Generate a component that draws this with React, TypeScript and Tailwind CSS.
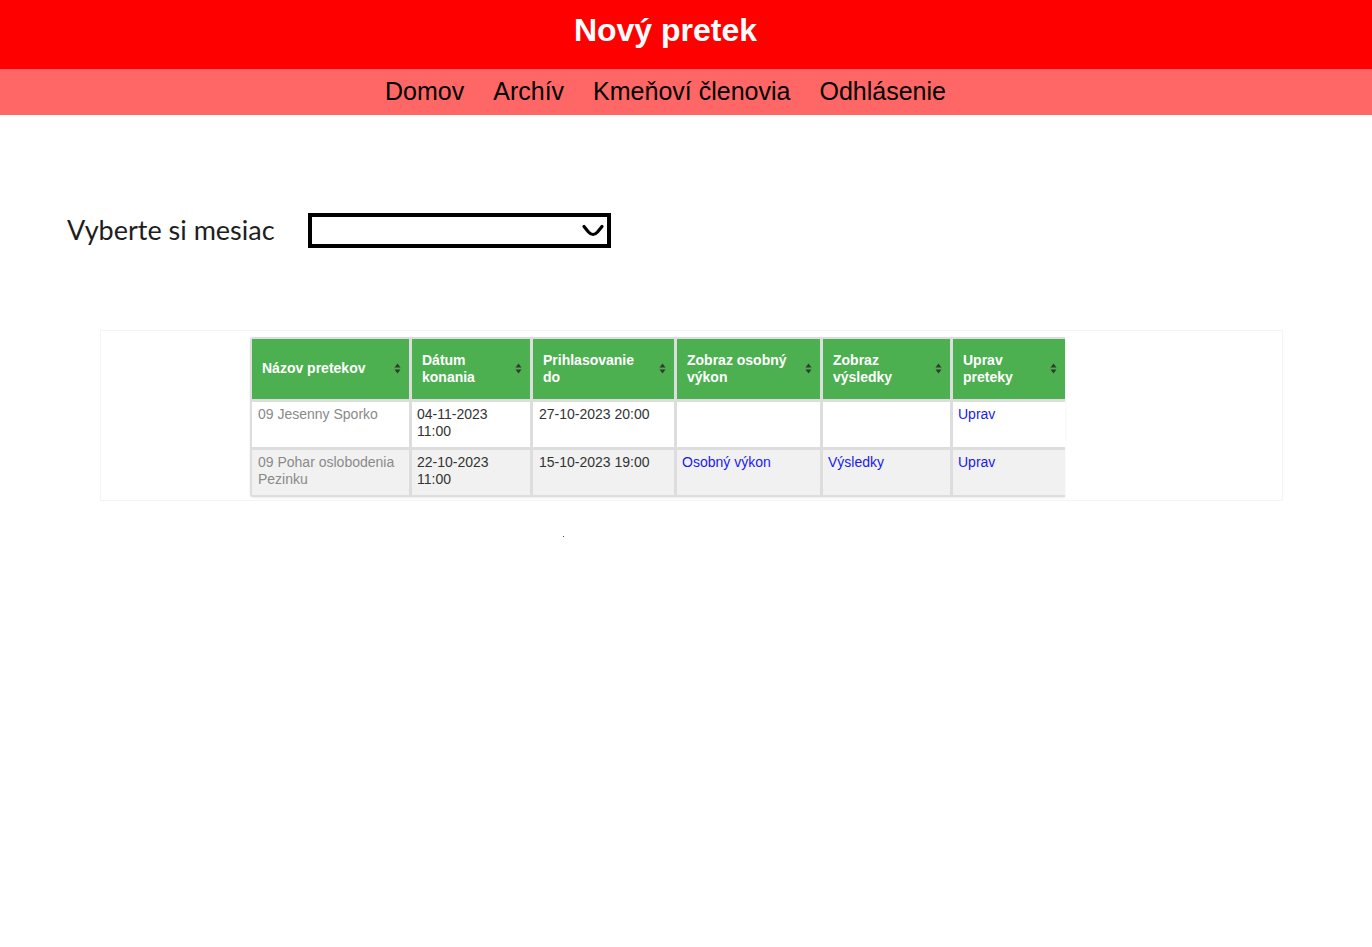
const columns = [
  { label: "Názov pretekov", width: "w-[157px]" },
  { label: "Dátum konania", width: "w-[118px]" },
  { label: "Prihlasovanie do", width: "w-[141px]" },
  { label: "Zobraz osobný výkon", width: "w-[143px]" },
  { label: "Zobraz výsledky", width: "w-[127px]" },
  { label: "Uprav preteky", width: "w-[112px]" },
];

const headerLines = [
  ["Názov pretekov"],
  ["Dátum", "konania"],
  ["Prihlasovanie", "do"],
  ["Zobraz osobný", "výkon"],
  ["Zobraz", "výsledky"],
  ["Uprav", "preteky"],
];

type Row = {
  name: string[];
  date: string[];
  until: string;
  personal?: string;
  results?: string;
  edit: string;
  bg: string;
};

const rows: Row[] = [
  {
    name: ["09 Jesenny Sporko"],
    date: ["04-11-2023", "11:00"],
    until: "27-10-2023 20:00",
    edit: "Uprav",
    bg: "bg-white",
  },
  {
    name: ["09 Pohar oslobodenia", "Pezinku"],
    date: ["22-10-2023", "11:00"],
    until: "15-10-2023 19:00",
    personal: "Osobný výkon",
    results: "Výsledky",
    edit: "Uprav",
    bg: "bg-[#f1f1f1]",
  },
];

function SortIcon() {
  return (
    <svg width="7" height="11" viewBox="0 0 7 11" className="shrink-0">
      <path d="M3.5 0.5 L6.5 4.5 H0.5 Z" fill="#2f3b2f" />
      <path d="M3.5 10.5 L6.5 6.5 H0.5 Z" fill="#2f3b2f" />
    </svg>
  );
}

function Lines({ lines }: { lines: string[] }) {
  return (
    <>
      {lines.map((l) => (
        <div key={l}>{l}</div>
      ))}
    </>
  );
}

function RacesTable() {
  return (
    <div className="inline-flex flex-col gap-[3px] rounded-l-[3px] bg-[#dddddd] py-[2px] pl-[2px] font-['Liberation_Sans',Arial,sans-serif] text-[14px] leading-[17px] shadow-[0_1px_2px_rgba(0,0,0,0.08)]">
      <div className="flex gap-[3px]">
        {columns.map((c, i) => (
          <div
            key={c.label}
            className={`${c.width} flex h-[60px] items-center justify-between bg-[#4caf50] pl-[10px] pr-[8px] font-bold text-white`}
          >
            <div>
              <Lines lines={headerLines[i]} />
            </div>
            <SortIcon />
          </div>
        ))}
      </div>
      {rows.map((r) => (
        <div key={r.name[0]} className="flex gap-[3px]">
          <div className={`w-[157px] h-[45px] ${r.bg} px-[6px] pt-[4px] text-[#8a8a8a]`}>
            <Lines lines={r.name} />
          </div>
          <div className={`w-[118px] h-[45px] ${r.bg} px-[5px] pt-[4px] text-[#333]`}>
            <Lines lines={r.date} />
          </div>
          <div className={`w-[141px] h-[45px] ${r.bg} px-[6px] pt-[4px] text-[#333]`}>
            {r.until}
          </div>
          <div className={`w-[143px] h-[45px] ${r.bg} px-[5px] pt-[4px] text-[#1a1aee]`}>
            {r.personal}
          </div>
          <div className={`w-[127px] h-[45px] ${r.bg} px-[5px] pt-[4px] text-[#1a1aee]`}>
            {r.results}
          </div>
          <div className={`w-[112px] h-[45px] ${r.bg} px-[5px] pt-[4px] text-[#1a1aee]`}>
            {r.edit}
          </div>
        </div>
      ))}
    </div>
  );
}

export default function App() {
  return (
    <div className="min-h-[947px] bg-white font-['Liberation_Sans',Arial,sans-serif]">
      <header className="flex h-[69px] items-center justify-center bg-[#ff0000] pb-[10px] pr-[41px]">
        <h1 className="text-[32px] font-bold text-white">Nový pretek</h1>
      </header>
      <nav className="flex h-[46px] items-center justify-center gap-[29px] bg-[#ff6666] pr-[41px] text-[25px] text-black">
        <a>Domov</a>
        <a>Archív</a>
        <a>Kmeňoví členovia</a>
        <a>Odhlásenie</a>
      </nav>

      <section className="ml-[67px] mt-[95px] flex items-center gap-[33px]">
        <span className="font-['Lato','Open_Sans',sans-serif] text-[27px] text-[#1e1e1e]">
          Vyberte si mesiac
        </span>
        <div className="flex h-[35px] w-[303px] items-center justify-end border-[4px] border-black pr-[2px]">
          <svg width="24" height="16" viewBox="0 0 24 16">
            <path
              d="M3 4.5 L7.5 10 Q12 15 16.5 10 L21 4.5"
              fill="none"
              stroke="black"
              strokeWidth="3.2"
              strokeLinecap="round"
              strokeLinejoin="round"
            />
          </svg>
        </div>
      </section>

      <section className="ml-[100px] mt-[79px] h-[171px] w-[1183px] border border-[#f4f4f4] pl-[149px] pt-[6px]">
        <RacesTable />
      </section>

      <div className="ml-[563px] mt-[35px] h-[1px] w-[1px] bg-[#444]" />
    </div>
  );
}
